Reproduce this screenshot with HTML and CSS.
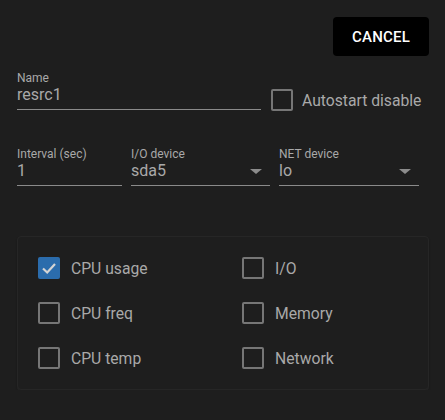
FILE: index.html
```html
<!DOCTYPE html>
<html>
<head>
<meta charset="utf-8">
<link rel="stylesheet" href="styles.css">
</head>
<body>
<div class="page">
  <div class="topbar">
    <button class="cancel">CANCEL</button>
  </div>
  <div class="row row1">
    <div class="field name">
      <div class="label">Name</div>
      <div class="value">resrc1</div>
    </div>
    <label class="check auto">
      <span class="box"></span>
      <span class="text">Autostart disable</span>
    </label>
  </div>
  <div class="row row2">
    <div class="field interval">
      <div class="label">Interval (sec)</div>
      <div class="value">1</div>
    </div>
    <div class="field select io">
      <div class="label">I/O device</div>
      <div class="value">sda5</div>
      <span class="arrow"></span>
    </div>
    <div class="field select net">
      <div class="label">NET device</div>
      <div class="value">lo</div>
      <span class="arrow"></span>
    </div>
  </div>
  <div class="card">
    <label class="check"><span class="box checked"><svg viewBox="0 0 22 22" width="22" height="22"><path d="M5 11.5 L9.2 15.5 L17 7" fill="none" stroke="#d4d4d4" stroke-width="2.2"/></svg></span><span class="text">CPU usage</span></label>
    <label class="check"><span class="box"></span><span class="text">I/O</span></label>
    <label class="check"><span class="box"></span><span class="text">CPU freq</span></label>
    <label class="check"><span class="box"></span><span class="text">Memory</span></label>
    <label class="check"><span class="box"></span><span class="text">CPU temp</span></label>
    <label class="check"><span class="box"></span><span class="text">Network</span></label>
  </div>
</div>
</body>
</html>
```
FILE: styles.css
```css
html, body {
  margin: 0;
  padding: 0;
  background: #1e1e1e;
  font-family: Roboto, "Liberation Sans", sans-serif;
  color: #a9a9a9;
}
.page {
  padding: 17px 16px 0 17px;
  width: 412px;
}
.topbar {
  display: flex;
  justify-content: flex-end;
}
.cancel {
  width: 96px;
  height: 39px;
  background: #000;
  color: #fff;
  border: none;
  border-radius: 4px;
  font-family: Roboto, "Liberation Sans", sans-serif;
  font-weight: 500;
  font-size: 15px;
  letter-spacing: 0.2px;
  padding: 0;
}
.row {
  display: flex;
  align-items: flex-end;
}
.row1 {
  margin-top: 15px;
}
.row2 {
  margin-top: 37px;
  gap: 9px;
}
.field {
  position: relative;
  border-bottom: 1px solid #8a8a8a;
  box-sizing: border-box;
}
.label {
  font-size: 12px;
  line-height: 14px;
  color: #a9a9a9;
}
.value {
  font-size: 16px;
  line-height: 19px;
  padding-bottom: 5px;
  color: #a9a9a9;
}
.name {
  width: 244px;
}
.interval { width: 105px; }
.io { width: 139px; }
.net { width: 140px; }
.arrow {
  position: absolute;
  right: 8px;
  top: 22px;
  width: 0;
  height: 0;
  border-left: 6px solid transparent;
  border-right: 6px solid transparent;
  border-top: 5px solid #8c8c8c;
}
.check {
  display: flex;
  align-items: center;
  gap: 11px;
  font-size: 15.7px;
  color: #a9a9a9;
}
.auto {
  margin-left: 10px;
  margin-bottom: 0;
  gap: 9px;
  height: 22px;
  position: relative;
  top: 1px;
}
.box {
  width: 22px;
  height: 22px;
  box-sizing: border-box;
  border: 2px solid #767676;
  border-radius: 2px;
  flex: none;
  display: block;
}
.box.checked {
  border: none;
  background: #2b6cac;
}
.box svg { display: block; }
.card {
  margin-top: 50px;
  border: 1px solid #262626;
  border-radius: 4px;
  box-shadow: 0 2px 2px rgba(0,0,0,0.35), 0 1px 0 #333;
  padding: 20px 20px 20px 20px;
  display: grid;
  grid-template-columns: 204px 1fr;
  row-gap: 23px;
}
```
